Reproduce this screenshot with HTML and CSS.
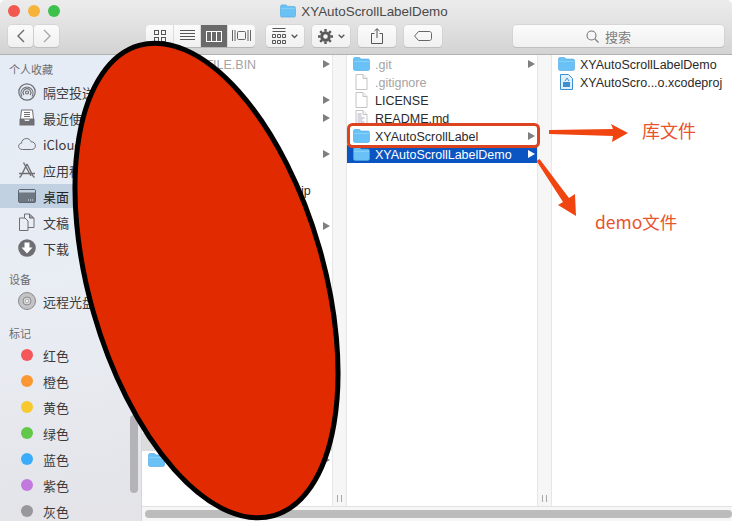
FILE: index.html
```html
<html>
    <head>
        <meta charset="utf-8">
        <link rel="stylesheet" href="styles.css">
    </head>
    <body>
        <svg class="defs" width="0" height="0">
            <symbol id="folder" viewBox="0 0 17 14">
                <path d="M.5 2.2C.5 1.2 1.2.5 2.2.5h3.6c.8 0 1.2.3 1.7.9l.6.7h6.8c1 0 1.6.7 1.6 1.6v8.1c0 1-.7 1.7-1.7 1.7H2.2c-1 0-1.7-.7-1.7-1.7z" fill="#69c1f6" stroke="#4ea3dc" stroke-width=".6"/>
                <path d="M.8 4.4h15.4" stroke="#92d5fa" stroke-width=".8"/>
            </symbol>
            <symbol id="file" viewBox="0 0 14 16">
                <path d="M1.5.5h7l4 4v11h-11z" fill="#fff" stroke="#c4c4c4"/>
                <path d="M8.5.5v4h4" fill="#f2f2f2" stroke="#c4c4c4"/>
            </symbol>
            <symbol id="textfile" viewBox="0 0 14 16">
                <path d="M1.5.5h7l4 4v11h-11z" fill="#fff" stroke="#c4c4c4"/>
                <path d="M8.5.5v4h4" fill="#f2f2f2" stroke="#c4c4c4"/>
                <path d="M3 4h4M3 6h4M3 8h7M3 10h5M3 12h7" stroke="#8a86a8" stroke-width=".7"/>
            </symbol>
        </svg>

        <div class="window">
            <header class="titlebar">
                <div class="lights">
                    <span class="light red"></span>
                    <span class="light yellow"></span>
                    <span class="light green"></span>
                </div>
                <div class="title">
                    <svg class="title-icon"><use href="#folder"/></svg>
                    <span>XYAutoScrollLabelDemo</span>
                </div>
            </header>

            <div class="toolbar">
                <div class="group nav">
                    <button class="btn nav-btn">
                        <svg width="10" height="16" viewBox="0 0 10 16"><path d="M8 2 2 8l6 6" fill="none" stroke="#6a6a6a" stroke-width="1.4"/></svg>
                    </button>
                    <button class="btn nav-btn">
                        <svg width="10" height="16" viewBox="0 0 10 16"><path d="m2 2 6 6-6 6" fill="none" stroke="#a8a8a8" stroke-width="1.4"/></svg>
                    </button>
                </div>
                <div class="group views">
                    <button class="seg">
                        <svg width="14" height="14" viewBox="0 0 14 14" fill="none" stroke="#555"><rect x="1.5" y="1.5" width="4" height="4"/><rect x="8.5" y="1.5" width="4" height="4"/><rect x="1.5" y="8.5" width="4" height="4"/><rect x="8.5" y="8.5" width="4" height="4"/></svg>
                    </button>
                    <button class="seg">
                        <svg width="15" height="12" viewBox="0 0 15 12" stroke="#555"><path d="M0 .5h15M0 3.5h15M0 6.5h15M0 9.5h15"/></svg>
                    </button>
                    <button class="seg active">
                        <svg width="16" height="11" viewBox="0 0 16 11" fill="none" stroke="#fff"><rect x=".5" y=".5" width="15" height="10"/><path d="M5.5 0v11M10.5 0v11"/></svg>
                    </button>
                    <button class="seg">
                        <svg width="19" height="12" viewBox="0 0 19 12" fill="none" stroke="#666"><rect x="5.5" y="1.5" width="8" height="8" rx="1"/><path d="M.5 0v11M3 0v11M16 0v11M18.5 0v11"/></svg>
                    </button>
                </div>
                <button class="btn arrange">
                    <svg width="14" height="16" viewBox="0 0 14 16" fill="none" stroke="#555"><path d="M.5 .5h13M.5 3.5h13"/><path d="M.5 6.5h3v3h-3zM5.500 6.500h3v3h-3zM10.500 6.500h3v3h-3zM.5 12.500h3v3h-3zM5.500 12.500h3v3h-3zM10.500 12.500h3v3h-3z"/></svg>
                    <svg class="chev" width="7" height="5" viewBox="0 0 7 5"><path d="m.7.7 2.800 2.800L6.300.7" fill="none" stroke="#555" stroke-width="1.300"/></svg>
                </button>
                <button class="btn gear">
                    <svg width="15" height="15" viewBox="0 0 15 15"><circle cx="7.500" cy="7.500" r="3.800" fill="none" stroke="#5a5a5a" stroke-width="3"/><path d="M7.500 0v15M0 7.500h15M2.200 2.200l10.600 10.600M12.800 2.200 2.200 12.800" stroke="#5a5a5a" stroke-width="2.400" stroke-dasharray="2.600 9.800"/></svg>
                    <svg class="chev" width="7" height="5" viewBox="0 0 7 5"><path d="m.7.7 2.800 2.800L6.300.7" fill="none" stroke="#555" stroke-width="1.300"/></svg>
                </button>
                <button class="btn square">
                    <svg width="12" height="16" viewBox="0 0 12 16" fill="none" stroke="#555"><path d="M3.500 5.500h-3v10h11v-10h-3M6 10V.8M3.500 3 6 .7 8.500 3"/></svg>
                </button>
                <button class="btn square">
                    <svg width="18" height="10" viewBox="0 0 18 10" fill="none" stroke="#666"><path d="M4.500.5h11c1 0 2 .8 2 2v5c0 1.200-1 2-2 2h-11L.6 5z"/></svg>
                </button>
                <div class="btn search">
                    <svg width="13" height="13" viewBox="0 0 13 13" fill="none" stroke="#777" stroke-width="1.100"><circle cx="5.500" cy="5.500" r="4.500"/><path d="m9 9 3.500 3.500"/></svg>
                    <span>搜索</span>
                </div>
            </div>

            <div class="main">
                <aside class="sidebar">
                    <h4 class="side-head first">个人收藏</h4>
                    <div class="side-row">
                        <svg class="side-icon" viewBox="0 0 18 18" fill="none" stroke="#6f6f73" stroke-width="1.200"><circle cx="9" cy="9" r="8.200"/><path d="M4 13.500a6 6 0 1 1 10 0M6 12a3.800 3.800 0 1 1 6 0"/><circle cx="9" cy="9.500" r="1.500"/></svg>
                        <span>隔空投送</span>
                    </div>
                    <div class="side-row">
                        <svg class="side-icon" viewBox="0 0 18 18"><path d="M3.500 1h11l1 9H2.500z" fill="#fff" stroke="#6f6f73"/><path d="M6 3.500h6M6 5.500h6M6 7.500h6" stroke="#6f6f73"/><path d="M1.500 10h4.500l1 2h4l1-2h4.500v6.500h-15z" fill="#6f6f73"/></svg>
                        <span>最近使用</span>
                    </div>
                    <div class="side-row">
                        <svg class="side-icon" viewBox="0 0 18 18" fill="none" stroke="#6f6f73"><path d="M4.500 14.500C2 14.500.6 13 .6 11.300c0-1.700 1.200-2.900 2.800-3 .3-2.900 2.500-4.800 5-4.800 2.200 0 3.900 1.400 4.600 3.200 2.500 0 4.400 1.700 4.400 4.100 0 2.300-1.700 3.700-3.900 3.700z"/></svg>
                        <span>iCloud Drive</span>
                    </div>
                    <div class="side-row">
                        <svg class="side-icon" viewBox="0 0 18 18" fill="none" stroke="#6f6f73" stroke-width="1.400"><path d="M9 3 3 15M9 3l6 12M5.500 1.500 13 15M1 12.500h16M1.500 16.500 3 15M16.500 16.500 15 15"/></svg>
                        <span>应用程序</span>
                    </div>
                    <div class="side-row selected">
                        <svg class="side-icon" viewBox="0 0 18 18"><rect x=".5" y="2.500" width="17" height="13" rx="1.500" fill="#6f7782" stroke="#5d6570"/><rect x="1" y="3" width="16" height="2.500" fill="#c3d2e1"/><path d="M10 13h1M12 13h1M14 13h1" stroke="#dfe6ee"/></svg>
                        <span>桌面</span>
                    </div>
                    <div class="side-row">
                        <svg class="side-icon" viewBox="0 0 18 18" fill="#e9edf4" stroke="#6f6f73"><path d="M6.500 1h5l4.500 4v9.500H6.500z"/><path d="M11.500 1v4h4.500" fill="#9a9a9e"/><path d="M1.500 5h5.500l3 3v9.500H1.500z"/></svg>
                        <span>文稿</span>
                    </div>
                    <div class="side-row">
                        <svg class="side-icon" viewBox="0 0 18 18"><circle cx="9" cy="9" r="8.800" fill="#6f6f73"/><path d="M6.500 3.500h5v5h3L9 14.500 3.500 8.500h3z" fill="#fff"/></svg>
                        <span>下载</span>
                    </div>

                    <h4 class="side-head">设备</h4>
                    <div class="side-row">
                        <svg class="side-icon" viewBox="0 0 18 18"><circle cx="9" cy="9" r="8.500" fill="#c4c4c6" stroke="#8a8a8e"/><circle cx="9" cy="9" r="4" fill="#dcdcde" stroke="#8a8a8e"/><circle cx="9" cy="9" r="1.800" fill="#f0f0f2" stroke="#8a8a8e" stroke-width=".6"/></svg>
                        <span>远程光盘</span>
                    </div>

                    <h4 class="side-head tags-head">标记</h4>
                    <div class="side-row"><span class="tag tag-red"></span><span>红色</span></div>
                    <div class="side-row"><span class="tag tag-orange"></span><span>橙色</span></div>
                    <div class="side-row"><span class="tag tag-yellow"></span><span>黄色</span></div>
                    <div class="side-row"><span class="tag tag-green"></span><span>绿色</span></div>
                    <div class="side-row"><span class="tag tag-blue"></span><span>蓝色</span></div>
                    <div class="side-row"><span class="tag tag-purple"></span><span>紫色</span></div>
                    <div class="side-row"><span class="tag tag-grey"></span><span>灰色</span></div>

                    <div class="side-scroll"></div>
                </aside>

                <section class="browser">
                    <div class="columns">
                        <div class="col col-a">
                            <div class="row dim"><span class="name">BOOTFILE.BIN</span><i class="arrow"></i></div>
                            <div class="row"></div>
                            <div class="row"><span class="name"></span><i class="arrow"></i></div>
                            <div class="row"><span class="name"></span><i class="arrow"></i></div>
                            <div class="row"></div>
                            <div class="row"><span class="name"></span><i class="arrow"></i></div>
                            <div class="row"></div>
                            <div class="row"><span class="name">XYAutoScrollLabel-mr.zip</span></div>
                            <div class="row"></div>
                            <div class="row"><span class="name"></span><i class="arrow"></i></div>
                            <div class="row"></div>
                            <div class="row"></div>
                            <div class="row"></div>
                            <div class="row"></div>
                            <div class="row"></div>
                            <div class="row"></div>
                            <div class="row"></div>
                            <div class="row"></div>
                            <div class="row"></div>
                            <div class="row"></div>
                            <div class="row"></div>
                            <div class="row inactive"></div>
                            <div class="row row-folder">
                                <svg class="row-icon"><use href="#folder"/></svg>
                                <span class="name"></span><i class="arrow"></i>
                            </div>
                        </div>
                        <div class="grip"><i></i><i></i></div>
                        <div class="col col-b">
                            <div class="row dim"><svg class="row-icon"><use href="#folder"/></svg><span class="name">.git</span><i class="arrow"></i></div>
                            <div class="row dim"><svg class="row-icon"><use href="#file"/></svg><span class="name">.gitignore</span></div>
                            <div class="row"><svg class="row-icon"><use href="#file"/></svg><span class="name">LICENSE</span></div>
                            <div class="row"><svg class="row-icon"><use href="#textfile"/></svg><span class="name">README.md</span></div>
                            <div class="row"><svg class="row-icon"><use href="#folder"/></svg><span class="name">XYAutoScrollLabel</span><i class="arrow"></i></div>
                            <div class="row active"><svg class="row-icon"><use href="#folder"/></svg><span class="name">XYAutoScrollLabelDemo</span><i class="arrow"></i></div>
                        </div>
                        <div class="grip"><i></i><i></i></div>
                        <div class="col col-c">
                            <div class="row"><svg class="row-icon"><use href="#folder"/></svg><span class="name">XYAutoScrollLabelDemo</span></div>
                            <div class="row">
                                <svg class="row-icon" viewBox="0 0 17 16"><path d="M2.500.5h8l4 4v11h-12z" fill="#dff0fc" stroke="#3d8fd0"/><path d="M5 8h7v5H5z" fill="#3d8fd0"/><path d="M7 7l2-3 2 3" fill="none" stroke="#3d8fd0"/></svg>
                                <span class="name">XYAutoScro...o.xcodeproj</span>
                            </div>
                        </div>
                    </div>
                    <div class="hscroll"><div class="hscroll-thumb"></div></div>
                </section>
            </div>

            <svg class="marks" width="732" height="521" viewBox="0 0 732 521">
                <ellipse cx="206.500" cy="280.500" rx="117.500" ry="244.500" transform="rotate(-16 206.500 280.500)" fill="#e12a00" stroke="#000" stroke-width="5"/>
                <rect x="348.500" y="124.500" width="190" height="22" rx="4" fill="none" stroke="#dc4420" stroke-width="3"/>
                <path d="M549 130 613 129 611 124 628 133 612 142 613 136 549 134z" fill="#f04510"/>
                <path d="M536.500 161 539.500 159 569 198 575 194 576 216 558 205 563 202z" fill="#f04510"/>
            </svg>
            <span class="note note-lib">库文件</span>
            <span class="note note-demo">demo文件</span>
        </div>
    </body>
</html>
```

FILE: styles.css
```css
* {
    box-sizing: border-box;
}
body {
    margin: 0;
    width: 732px;
    height: 521px;
    overflow: hidden;
    background: #fff;
    font-family: "Liberation Sans", "Noto Sans CJK SC", sans-serif;
    font-size: 12.5px;
    color: #2a2a2a;
}
button {
    padding: 0;
    font: inherit;
}
.defs {
    position: absolute;
}
.window {
    position: relative;
    width: 732px;
    height: 521px;
    display: flex;
    flex-direction: column;
    overflow: hidden;
    border-radius: 5px 5px 0 0;
}

/* title + toolbar */
.titlebar {
    position: relative;
    height: 22px;
    flex-shrink: 0;
    background: linear-gradient(#ececec, #e3e3e3);
}
.lights {
    position: absolute;
    left: 8px;
    top: 5px;
    display: flex;
    gap: 8px;
}
.light {
    width: 12px;
    height: 12px;
    border-radius: 50%;
}
.red { background: #f1584f; }
.yellow { background: #f6b33a; }
.green { background: #3dc04c; }
.title {
    display: flex;
    align-items: center;
    justify-content: center;
    gap: 5px;
    height: 22px;
    padding-right: 4px;
    font-size: 13.4px;
    color: #4a4a4a;
}
.title-icon {
    width: 16px;
    height: 14px;
}
.toolbar {
    display: flex;
    align-items: flex-start;
    height: 33px;
    flex-shrink: 0;
    padding: 3px 8px 0;
    background: linear-gradient(#e3e3e3, #d3d3d3);
    border-bottom: 1px solid #b1b1b1;
}
.group {
    display: flex;
}
.btn, .seg {
    display: flex;
    align-items: center;
    justify-content: center;
    height: 22px;
    background: linear-gradient(#fbfbfb, #f0f0f0);
    border: 0;
    box-shadow: 0 0 0 .5px #c9c9c9, 0 1px 0 #b5b5b5;
}
.btn {
    border-radius: 4px;
}
.nav {
    gap: 1px;
}
.nav-btn {
    width: 25px;
}
.views {
    margin-left: 87px;
    border-radius: 4px;
    overflow: hidden;
    box-shadow: 0 1px 0 #b5b5b5;
}
.seg {
    width: 27px;
    box-shadow: none;
    border-right: 1px solid #dcdcdc;
}
.seg:first-child {
    width: 28px;
}
.seg:last-child {
    border-right: 0;
}
.seg.active {
    background: #6a6a6a;
}
.arrange, .gear {
    width: 38px;
    gap: 5px;
}
.arrange {
    margin-left: 11px;
}
.gear {
    margin-left: 8px;
}
.square {
    width: 38px;
    margin-left: 8px;
}
.search {
    width: 211px;
    margin-left: 71px;
    padding-right: 20px;
    gap: 6px;
    color: #7d7d7d;
    font-size: 13px;
}

.main {
    flex: 1;
    display: flex;
    min-height: 0;
}

/* sidebar */
.sidebar {
    position: relative;
    width: 142px;
    flex-shrink: 0;
    overflow: hidden;
    padding-top: 5px;
    background: linear-gradient(172deg, #e5ecf6, #e9edf3 55%, #e3e3e8);
    border-right: 1px solid #d6d6d8;
    font-family: "Noto Sans CJK SC", "Liberation Sans", sans-serif;
}
.side-head {
    margin: 9px 0 0;
    height: 18px;
    padding-left: 9px;
    line-height: 18px;
    font-size: 11px;
    font-weight: 400;
    color: #6c6c70;
}
.side-head.first {
    margin: 0 0 1px;
}
.side-head.tags-head {
    margin-top: 10px;
}
.side-row {
    display: flex;
    align-items: center;
    gap: 7px;
    height: 26px;
    padding-left: 18px;
    font-size: 13px;
    color: #3a3a3c;
    white-space: nowrap;
}
.side-row.selected {
    height: 24px;
    margin: 1px 0;
    background: #c1d1e1;
    color: #222;
}
.side-icon {
    width: 18px;
    height: 18px;
    flex-shrink: 0;
}
.tag {
    width: 12px;
    height: 12px;
    margin: 0 3px;
    border-radius: 50%;
    flex-shrink: 0;
}
.tag-red { background: #f4575a; }
.tag-orange { background: #fb9733; }
.tag-yellow { background: #f8c82f; }
.tag-green { background: #62c84b; }
.tag-blue { background: #3bacf9; }
.tag-purple { background: #c279de; }
.tag-grey { background: #98989c; }
.side-scroll {
    position: absolute;
    right: 3px;
    top: 360px;
    bottom: 28px;
    width: 8px;
    border-radius: 4px;
    background: #b4b4b8;
}

/* finder columns */
.browser {
    flex: 1;
    min-width: 0;
    display: flex;
    flex-direction: column;
}
.columns {
    flex: 1;
    display: flex;
    min-height: 0;
}
.col {
    background: #fff;
}
.col-a, .col-b {
    width: 190px;
    flex-shrink: 0;
}
.col-c {
    flex: 1;
}
.grip {
    width: 15px;
    flex-shrink: 0;
    background: #f6f6f6;
    border-left: 1px solid #e6e6e6;
    border-right: 1px solid #e6e6e6;
    display: flex;
    justify-content: center;
    align-items: flex-end;
    gap: 3px;
    padding-bottom: 4px;
}
.grip i {
    width: 1px;
    height: 7px;
    background: #a8a8a8;
}
.row {
    display: flex;
    align-items: center;
    height: 18px;
    padding: 0 2px 0 6px;
    color: #2a2a2a;
    white-space: nowrap;
}
.row.dim {
    color: #a4a4a4;
}
.row.active {
    background: #0a55c2;
    color: #fff;
}
.row.inactive {
    background: #dcdcdc;
}
.col-a .row {
    padding-left: 28px;
}
.col-a .row-folder {
    padding-left: 6px;
}
.row-icon {
    width: 17px;
    height: 16px;
    margin-right: 5px;
    flex-shrink: 0;
}
.name {
    flex: 1;
    padding-top: 1px;
}
.arrow {
    width: 0;
    height: 0;
    border-left: 7px solid #7f7f7f;
    border-top: 4.500px solid transparent;
    border-bottom: 4.500px solid transparent;
}
.row.active .arrow {
    border-left-color: #fff;
}
.hscroll {
    height: 15px;
    flex-shrink: 0;
    padding: 3px 0 3px 3px;
    background: #f6f6f6;
    border-top: 1px solid #e2e2e2;
}
.hscroll-thumb {
    height: 8px;
    border-radius: 4px;
    background: #bcbcbc;
}

/* things drawn over the screenshot */
.marks {
    position: absolute;
    left: 0;
    top: 0;
}
.note {
    position: absolute;
    font-family: "Noto Sans CJK SC", sans-serif;
    color: #e8532b;
    font-size: 17.5px;
    line-height: 24px;
    white-space: nowrap;
}
.note-lib {
    left: 642px;
    top: 118px;
    font-size: 18px;
}
.note-demo {
    left: 595px;
    top: 210px;
}
```
